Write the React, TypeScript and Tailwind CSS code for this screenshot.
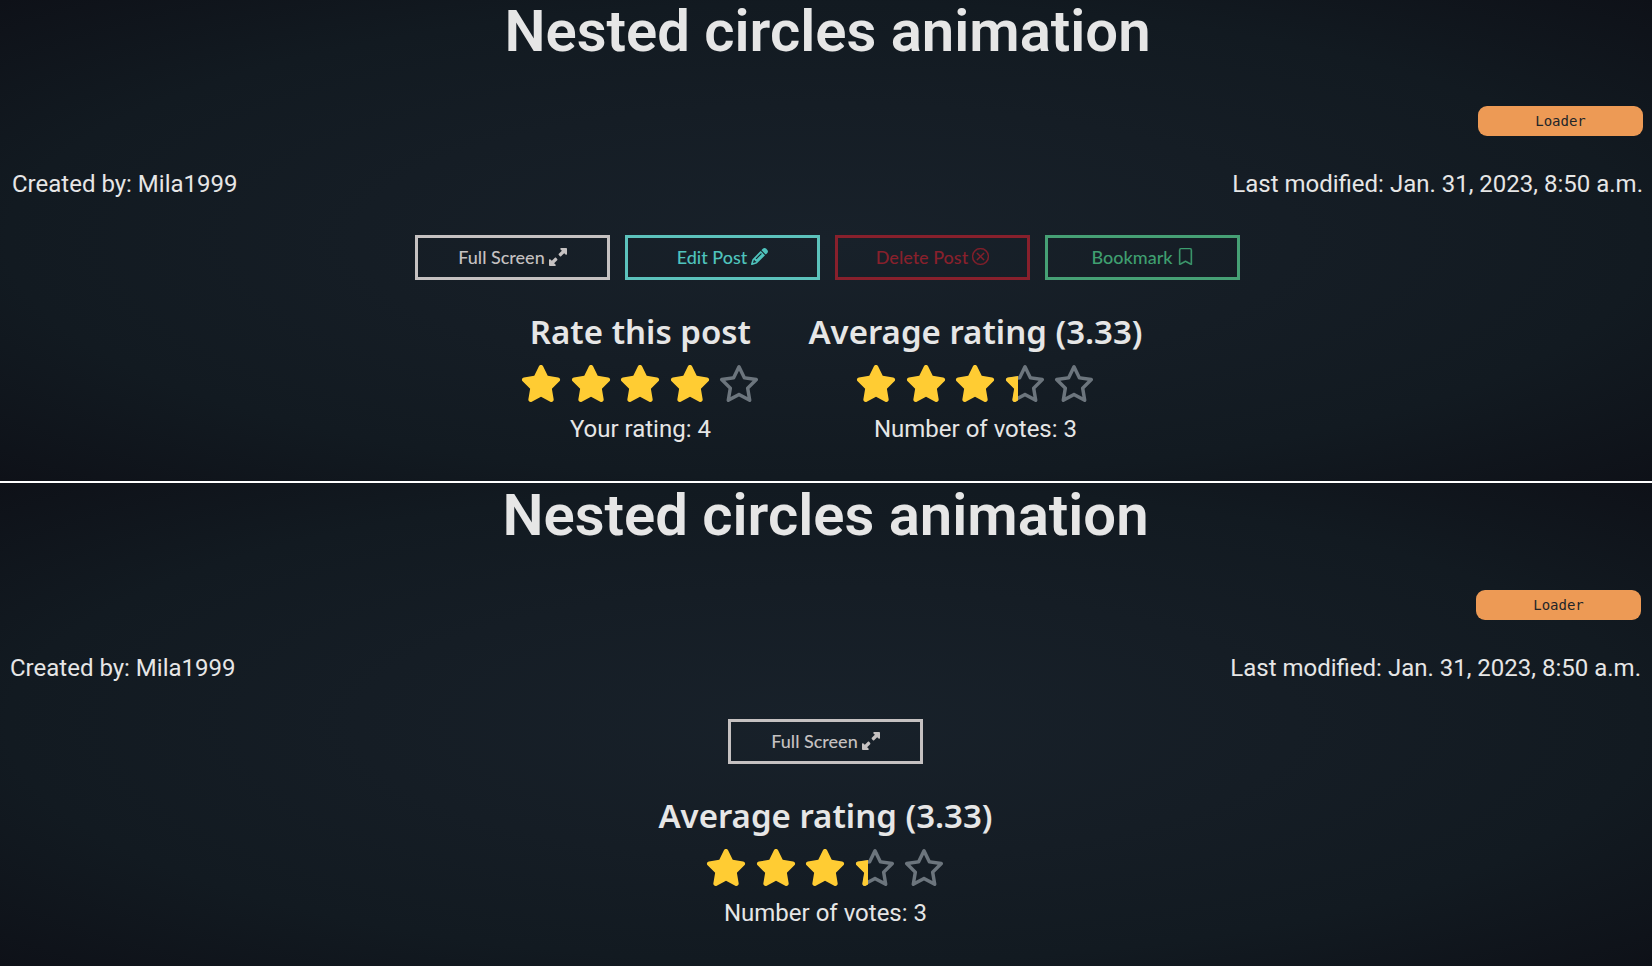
import type { ReactNode } from "react";
import { BsXCircle, BsBookmark } from "react-icons/bs";
import { FaPencil, FaRegStar, FaStar, FaUpRightAndDownLeftFromCenter } from "react-icons/fa6";

const BACKDROP =
  "bg-[#0f1219] bg-[radial-gradient(ellipse_at_center,#18212a_0%,#151d25_40%,#121a21_70%,#0e1118_100%)]";

function ActionButton({ tone, label, icon }: { tone: string; label: string; icon: ReactNode }) {
  return (
    <button
      type="button"
      className={`flex h-[45px] w-[195px] cursor-pointer items-center justify-center gap-1 border-3 pb-0.5 font-['Lato',sans-serif] text-lg leading-none font-medium ${tone}`}
    >
      {label}
      {icon}
    </button>
  );
}

function Stars({ value, label }: { value: number; label: string }) {
  return (
    <div role="img" aria-label={label} className="flex w-[240px] justify-between">
      {[0, 1, 2, 3, 4].map((i) => {
        const share = Math.max(0, Math.min(1, value - i));
        return (
          <span key={i} className="relative h-[37px] w-[42px]">
            {share < 1 && <FaRegStar className="size-full text-[#6c757d]" />}
            {share > 0 && (
              <span className="absolute inset-y-0 left-0 overflow-hidden" style={{ width: `${share * 100}%` }}>
                <FaStar className="h-[37px] w-[42px] text-[#ffcc33]" />
              </span>
            )}
          </span>
        );
      })}
    </div>
  );
}

function Rating({ title, value, note }: { title: string; value: number; note: string }) {
  return (
    <div className="flex flex-col items-center">
      <h2 className="font-['Noto_Sans',sans-serif] text-[33px] leading-[44px] font-semibold">{title}</h2>
      <div className="mt-[11px]">
        <Stars value={value} label={`${value} of 5 stars`} />
      </div>
      <p className="mt-[9px] text-2xl leading-9">{note}</p>
    </div>
  );
}

function Post({ className, actions, ratings }: { className: string; actions: ReactNode; ratings: ReactNode }) {
  return (
    <section className={`flex flex-col ${className} ${BACKDROP}`}>
      <h1 className="text-center text-[58px] leading-[62px] font-semibold">Nested circles animation</h1>
      <div className="mt-11 flex justify-end">
        <a
          href="#loader"
          className="flex h-[30px] w-[165px] items-center justify-center rounded-[9px] bg-[#ed9a55] font-['DejaVu_Sans_Mono',monospace] text-sm text-[#212529]"
        >
          Loader
        </a>
      </div>
      <div className="mt-[30px] flex justify-between text-2xl leading-9">
        <p>Created by: Mila1999</p>
        <p>Last modified: Jan. 31, 2023, 8:50 a.m.</p>
      </div>
      <div className="mt-[33px] flex justify-center gap-[15px]">{actions}</div>
      <div className="mt-[30px] flex justify-center">{ratings}</div>
    </section>
  );
}

const fullScreen = (
  <ActionButton
    tone="border-[#c5c1c1] text-[#c5c1c1]"
    label="Full Screen"
    icon={<FaUpRightAndDownLeftFromCenter className="size-[18px]" />}
  />
);
const average = <Rating title="Average rating (3.33)" value={3.33} note="Number of votes: 3" />;

export default function App() {
  return (
    <main className="grid min-h-screen grid-rows-2 font-['Roboto',sans-serif] text-[#e6e6e6]">
      <Post
        className="border-b-2 border-white pr-[9px] pl-3"
        actions={
          <>
            {fullScreen}
            <ActionButton
              tone="border-[#5cc2bc] text-[#4fc3bd]"
              label="Edit Post"
              icon={<FaPencil className="size-[17px]" />}
            />
            <ActionButton
              tone="border-[#88202c] text-[#88202c]"
              label="Delete Post"
              icon={<BsXCircle className="size-[17px]" strokeWidth={0.4} />}
            />
            <ActionButton
              tone="border-[#46a075] text-[#3f9f70]"
              label="Bookmark"
              icon={<BsBookmark className="size-[17px]" strokeWidth={0.4} />}
            />
          </>
        }
        ratings={
          <div className="flex gap-12 pl-2">
            <Rating title="Rate this post" value={4} note="Your rating: 4" />
            {average}
          </div>
        }
      />
      <Post className="pt-px pr-[11px] pl-2.5" actions={fullScreen} ratings={average} />
    </main>
  );
}
